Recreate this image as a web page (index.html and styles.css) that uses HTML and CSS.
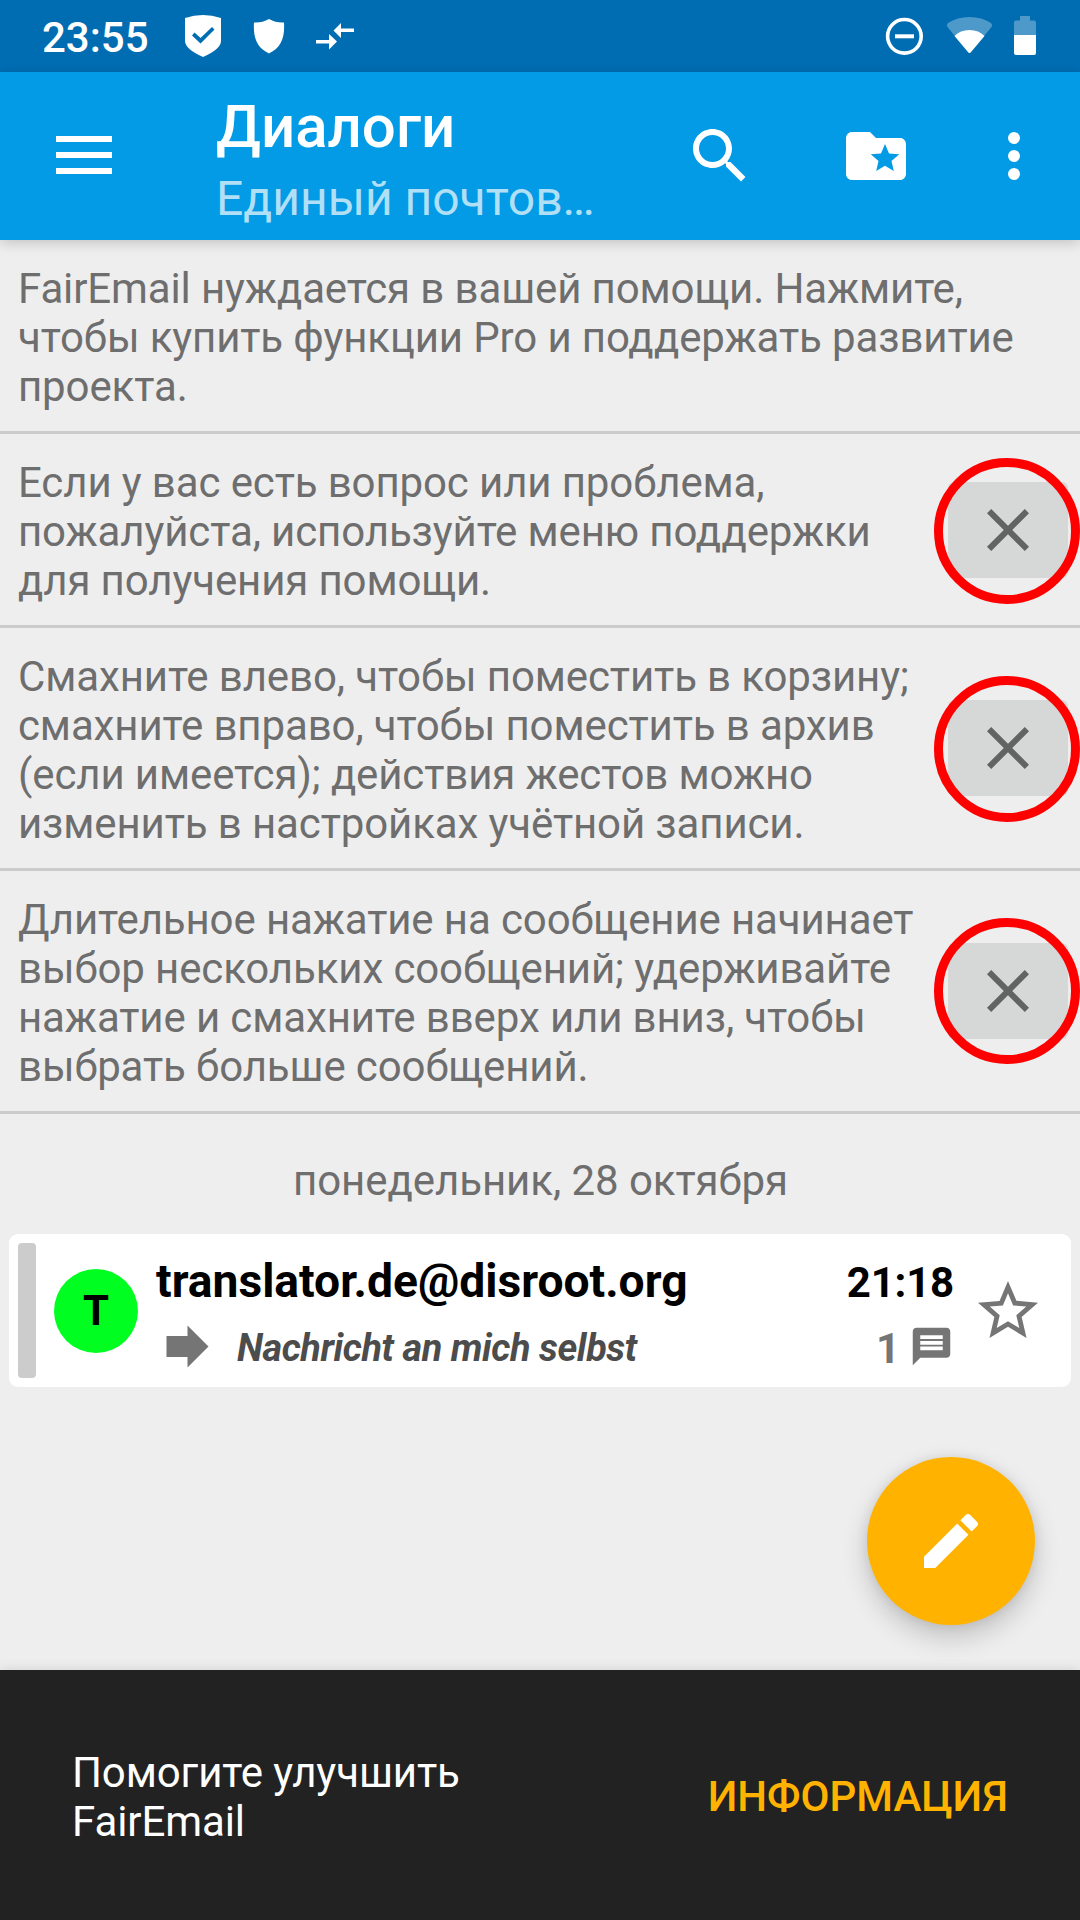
FILE: index.html
```html
<!DOCTYPE html>
<html lang="ru">
<head>
<meta charset="utf-8">
<title>FairEmail</title>
<link rel="stylesheet" href="styles.css">
</head>
<body>
<div class="screen">
  <header class="status">
    <span class="clock">23:55</span>
    <svg class="status-left" width="174" height="72" viewBox="0 0 174 72">
      <path fill="#fff" fill-rule="evenodd" d="M5 18Q23 12 41 18V41Q41 49 23 57Q5 49 5 41zM14.500 32.500L12 35.500 20.500 43.500 34.500 29.500 32 27 20.500 38z"/>
      <path fill="#fff" d="M89 19Q96 23 104 22.500C105 38 101 48 89 53.500C77 48 73 38 74 22.500Q82 23 89 19z"/>
      <path fill="#fff" d="M136 40h13v-6l8 7.500-8 8v-6h-13zM174 28.500h-13v-5.500l-7.500 7.500 7.500 7.500v-6h13z"/>
    </svg>
    <svg class="status-right" width="152" height="72" viewBox="0 0 152 72">
      <circle cx="20.400" cy="36.300" r="16.800" fill="none" stroke="#fff" stroke-width="3.600"/>
      <path fill="#fff" d="M11 34.300h19v4H11z"/>
      <path fill="#4c99ca" d="M63.500 27Q62 25 64 23Q73 17 85.500 17T107 23Q109 25 107.500 27L87 52Q85.500 54 84 52z"/>
      <path fill="#fff" d="M70.500 36Q76 30 85.500 30T100.500 36L87 52Q85.500 54 84 52z"/>
      <path fill="#4c99ca" d="M136 16h10v4.500h4q2 0 2 2V35H130V22.500q0-2 2-2h4z"/>
      <path fill="#fff" d="M130 35h22v18q0 2-2 2h-18q-2 0-2-2z"/>
    </svg>
  </header>

  <nav class="toolbar">
    <svg class="menu" width="56" height="38" viewBox="0 0 56 38"><path fill="#fff" d="M0 0h56v6H0zM0 16h56v6H0zM0 32h56v6H0z"/></svg>
    <div class="titles">
      <div class="title">Диалоги</div>
      <div class="subtitle">Единый почтов…</div>
    </div>
    <svg class="search" width="72" height="72" viewBox="0 0 24 24"><path fill="#fff" d="M15.500 14h-.79l-.28-.27C15.410 12.590 16 11.110 16 9.500 16 5.910 13.090 3 9.500 3S3 5.910 3 9.500 5.910 16 9.500 16c1.610 0 3.090-.59 4.230-1.570l.27.28v.79l5 4.990L20.490 19l-4.990-5zm-6 0C7.010 14 5 11.990 5 9.500S7.010 5 9.500 5 14 7.010 14 9.500 11.990 14 9.500 14z"/></svg>
    <svg class="folder" width="72" height="72" viewBox="0 0 24 24"><path fill="#fff" d="M20 6h-8l-2-2H4c-1.100 0-1.990.9-1.990 2L2 18c0 1.100.9 2 2 2h16c1.100 0 2-.9 2-2V8c0-1.100-.9-2-2-2zm-2.060 11L15 15.280 12.060 17l.78-3.330-2.590-2.240 3.410-.29L15 8l1.340 3.140 3.410.29-2.590 2.240.78 3.330z"/></svg>
    <svg class="more" width="72" height="72" viewBox="0 0 24 24"><path fill="#fff" d="M12 8a2 2 0 1 0 0-4 2 2 0 0 0 0 4zm0 2a2 2 0 1 0 0 4 2 2 0 0 0 0-4zm0 6a2 2 0 1 0 0 4 2 2 0 0 0 0-4z"/></svg>
  </nav>

  <main class="content">
    <section class="hint">
      <p>FairEmail нуждается в вашей помощи. Нажмите,<br>чтобы купить функции Pro и поддержать развитие<br>проекта.</p>
    </section>
    <section class="hint">
      <p>Если у вас есть вопрос или проблема,<br>пожалуйста, используйте меню поддержки<br>для получения помощи.</p>
      <div class="close"><svg width="72" height="72" viewBox="0 0 24 24"><path d="M19 6.410L17.590 5 12 10.590 6.410 5 5 6.410 10.590 12 5 17.590 6.410 19 12 13.410 17.590 19 19 17.590 13.410 12z"/></svg><i class="ring"></i></div>
    </section>
    <section class="hint">
      <p>Смахните влево, чтобы поместить в корзину;<br>смахните вправо, чтобы поместить в архив<br>(если имеется); действия жестов можно<br>изменить в настройках учётной записи.</p>
      <div class="close"><svg width="72" height="72" viewBox="0 0 24 24"><path d="M19 6.410L17.590 5 12 10.590 6.410 5 5 6.410 10.590 12 5 17.590 6.410 19 12 13.410 17.590 19 19 17.590 13.410 12z"/></svg><i class="ring"></i></div>
    </section>
    <section class="hint">
      <p>Длительное нажатие на сообщение начинает<br>выбор нескольких сообщений; удерживайте<br>нажатие и смахните вверх или вниз, чтобы<br>выбрать больше сообщений.</p>
      <div class="close"><svg width="72" height="72" viewBox="0 0 24 24"><path d="M19 6.410L17.590 5 12 10.590 6.410 5 5 6.410 10.590 12 5 17.590 6.410 19 12 13.410 17.590 19 19 17.590 13.410 12z"/></svg><i class="ring ring-last"></i></div>
    </section>

    <div class="date">понедельник, 28 октября</div>

    <article class="card">
      <div class="bar"></div>
      <div class="avatar">T</div>
      <div class="message">
        <div class="line from-line">
          <span class="from">translator.de@disroot.org</span>
          <span class="time">21:18</span>
        </div>
        <div class="line">
          <svg width="63" height="63" viewBox="0 0 24 24"><path fill="#757575" d="M12 8V4l8 8-8 8v-4H4V8z"/></svg>
          <span class="subject">Nachricht an mich selbst</span>
          <span class="count">1</span>
          <svg width="45" height="45" viewBox="0 0 24 24"><path fill="#757575" d="M20 2H4c-1.100 0-1.990.9-1.990 2L2 22l4-4h14c1.100 0 2-.9 2-2V4c0-1.100-.9-2-2-2zm-2 12H6v-2h12v2zm0-3H6V9h12v2zm0-3H6V6h12v2z"/></svg>
        </div>
      </div>
      <svg class="star" width="72" height="72" viewBox="0 0 24 24"><path fill="#757575" d="M22 9.240l-7.190-.62L12 2 9.190 8.630 2 9.240l5.460 4.730L5.820 21 12 17.270 18.180 21l-1.630-7.030L22 9.240zM12 15.400l-3.760 2.270 1-4.280-3.320-2.880 4.380-.38L12 6.100l1.710 4.040 4.380.38-3.320 2.880 1 4.280L12 15.400z"/></svg>
    </article>

    <div class="fab"><svg width="72" height="72" viewBox="0 0 24 24"><path fill="#fff" d="M3 17.250V21h3.750L17.810 9.940l-3.750-3.750L3 17.250zM20.710 7.040c.39-.39.39-1.020 0-1.410l-2.340-2.340c-.39-.39-1.020-.39-1.410 0l-1.830 1.830 3.750 3.750 1.830-1.830z"/></svg></div>
  </main>

  <footer class="snackbar">
    <p>Помогите улучшить<br>FairEmail</p>
    <span class="action">ИНФОРМАЦИЯ</span>
  </footer>
</div>
</body>
</html>
```
FILE: styles.css
```css
* { box-sizing: border-box; margin: 0; padding: 0; }
svg { display: block; flex: none; }

body {
  background: #eee;
  font-family: Roboto, "Noto Sans", sans-serif;
  font-size: 42px;
  line-height: 49px;
}

.screen {
  width: 1080px;
  height: 1920px;
  display: flex;
  flex-direction: column;
  overflow: hidden;
}

.status {
  flex: none;
  height: 72px;
  display: flex;
  align-items: center;
  padding: 0 44px 0 42px;
  background: #006db3;
  color: #fff;
}
.clock { width: 138px; padding-top: 2px; font-weight: 500; }
.status-right { margin-left: auto; }

.toolbar {
  flex: none;
  position: relative;
  z-index: 1;
  height: 168px;
  display: flex;
  align-items: center;
  padding: 0 30px 0 56px;
  background: #039be5;
  color: #fff;
  box-shadow: 0 3px 12px rgba(0, 0, 0, .18);
}
.menu { margin-top: -2px; }
.titles { width: 468px; margin-left: 104px; padding-top: 8px; white-space: nowrap; }
.title { font-size: 60px; line-height: 70px; font-weight: 500; }
.subtitle { font-size: 48px; line-height: 56px; padding-top: 9px; margin-bottom: 1px; color: rgba(255, 255, 255, .7); }
.folder { margin-left: 84px; }
.more { margin-left: auto; }

.content {
  flex: 1;
  display: flex;
  flex-direction: column;
  min-height: 0;
  color: #6e6e6e;
}

.hint {
  flex: none;
  display: flex;
  align-items: center;
  justify-content: space-between;
  padding-right: 12px;
  border-bottom: 3px solid #cbcbcb;
}
.hint p { padding: 24px 0 20px 18px; letter-spacing: -.12px; white-space: nowrap; }

.close {
  position: relative;
  flex: none;
  width: 120px;
  height: 96px;
  display: flex;
  align-items: center;
  justify-content: center;
  border-radius: 6px;
  background: #d6d8d7;
  fill: #626463;
}
.ring {
  position: absolute;
  left: -14px;
  top: -24px;
  width: 146px;
  height: 146px;
  border: 9px solid #f00;
  border-radius: 50%;
}
.ring-last { top: -25px; }

.date { flex: none; height: 120px; padding: 42px 0 0 1px; letter-spacing: -.06px; text-align: center; }

.card {
  flex: none;
  height: 153px;
  margin: 0 9px;
  padding: 9px 27px 9px 9px;
  display: flex;
  align-items: center;
  border-radius: 9px;
  background: #fff;
}
.bar { width: 18px; height: 135px; border-radius: 4px; background: #ccc; }
.avatar {
  width: 84px;
  height: 84px;
  margin: 0 18px;
  border-radius: 50%;
  background: #00ff21;
  color: #000;
  font-weight: 700;
  line-height: 84px;
  text-align: center;
}
.message { width: 798px; white-space: nowrap; }
.line { height: 63px; display: flex; align-items: center; }
.from-line { align-items: baseline; justify-content: space-between; height: 72px; padding-top: 4px; color: #000; font-weight: 700; }
.from { font-size: 46.2px; line-height: 68px; }
.time { letter-spacing: -.2px; }
.subject { flex: 1; margin-left: 18px; padding-top: 3px; font-size: 37.8px; line-height: 44px; letter-spacing: -.41px; font-weight: 700; font-style: italic; color: #4c4c4c; }
.count { padding: 4px 9px 0 0; font-weight: 700; color: #757575; }
.star { margin-left: 18px; }

.fab {
  flex: none;
  align-self: flex-end;
  width: 168px;
  height: 168px;
  margin: 70px 45px 0 0;
  display: flex;
  align-items: center;
  justify-content: center;
  border-radius: 50%;
  background: #ffb300;
  box-shadow: 0 12px 26px rgba(0, 0, 0, .19), 0 0 12px rgba(0, 0, 0, .08);
}

.snackbar {
  flex: none;
  position: relative;
  height: 250px;
  display: flex;
  align-items: center;
  justify-content: space-between;
  padding: 3px 72px 0;
  background: #222;
  color: #fff;
  box-shadow: 0 0 12px rgba(0, 0, 0, .12);
}
.snackbar p { letter-spacing: -.1px; }
.action { color: #ffb300; font-weight: 500; }
```
